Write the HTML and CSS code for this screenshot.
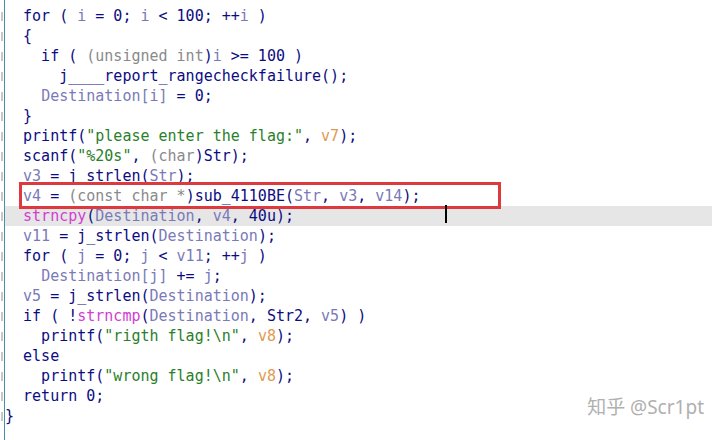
FILE: index.html
```html
<!DOCTYPE html>
<html>
<head>
<meta charset="utf-8">
<link rel="stylesheet" href="styles.css">
</head>
<body>
<div class="view">
  <div class="gutter">
    <div class="gl"></div><div class="gl"></div><div class="gl"></div><div class="gl"></div><div class="gl"></div><div class="gl"></div><div class="gl"></div><div class="gl"></div><div class="gl"></div><div class="gl"></div><div class="gl"></div><div class="gl"></div><div class="gl"></div><div class="gl"></div><div class="gl"></div><div class="gl"></div><div class="gl"></div><div class="gl"></div><div class="gl"></div><div class="gl"></div><div class="gl"></div>
  </div>
  <div class="code">
    <div class="ln">  for ( <span class="v">i</span> = 0; <span class="v">i</span> &lt; 100; ++<span class="v">i</span> )</div>
    <div class="ln">  {</div>
    <div class="ln">    if ( <span class="c">(unsigned int</span>)<span class="v">i</span> &gt;= 100 )</div>
    <div class="ln">      j____report_rangecheckfailure();</div>
    <div class="ln">    <span class="v">Destination[i]</span> = 0;</div>
    <div class="ln">  }</div>
    <div class="ln">  printf(<span class="s">"please enter the flag:"</span>, <span class="o">v7</span>);</div>
    <div class="ln">  scanf(<span class="s">"%20s"</span>, <span class="c">(char</span>)Str);</div>
    <div class="ln">  <span class="v">v3</span> = j_strlen(<span class="v">Str</span>);</div>
    <div class="ln">  <span class="v">v4</span> = <span class="c">(const char *</span>)sub_4110BE(<span class="v">Str</span>, <span class="v">v3</span>, <span class="v">v14</span>);</div>
    <div class="ln cur">  <span class="m">strncpy</span>(<span class="v">Destination</span>, <span class="v">v4</span>, 40u);</div>
    <div class="ln">  <span class="v">v11</span> = j_strlen(<span class="v">Destination</span>);</div>
    <div class="ln">  for ( <span class="v">j</span> = 0; <span class="v">j</span> &lt; <span class="v">v11</span>; ++<span class="v">j</span> )</div>
    <div class="ln">    <span class="v">Destination[j]</span> += <span class="v">j</span>;</div>
    <div class="ln">  <span class="v">v5</span> = j_strlen(<span class="v">Destination</span>);</div>
    <div class="ln">  if ( !<span class="m">strncmp</span>(<span class="v">Destination</span>, Str2, <span class="v">v5</span>) )</div>
    <div class="ln">    printf(<span class="s">"rigth flag!\n"</span>, <span class="o">v8</span>);</div>
    <div class="ln">  else</div>
    <div class="ln">    printf(<span class="s">"wrong flag!\n"</span>, <span class="o">v8</span>);</div>
    <div class="ln">  return 0;</div>
    <div class="ln">}</div>
    <div class="box"></div>
    <div class="caret"></div>
  </div>
  <div class="mark">知乎 @Scr1pt</div>
</div>
</body>
</html>
```
FILE: styles.css
```css
html, body {
  margin: 0;
  padding: 0;
  background: #ffffff;
}
.view {
  position: relative;
  width: 712px;
  height: 440px;
  overflow: hidden;
  display: flex;
  font-family: "DejaVu Sans Mono", monospace;
  font-size: 15px;
  line-height: 20px;
  color: #0c0c82;
}
.gutter {
  width: 4px;
  border-right: 1px solid #4a8fa8;
  padding-top: 6px;
  flex: none;
}
.gl {
  height: 20px;
  display: flex;
  flex-direction: column;
  justify-content: center;
}
.gl::before {
  content: "";
  display: block;
  width: 2px;
  height: 9px;
  margin-left: 1px;
  background: #c8c8c8;
}
.code {
  position: relative;
  flex: 1;
  padding-top: 6px;
}
.ln {
  white-space: pre;
  height: 20px;
}
.cur {
  background: #e6e6e6;
}
.v { color: #7a7ab8; }
.c { color: #8a8a8a; }
.s { color: #2a7f2a; }
.o { color: #df9a52; }
.m { color: #d23ed2; }
.box {
  position: absolute;
  left: 14px;
  top: 182px;
  width: 476px;
  height: 21px;
  border: 3px solid #dc3a3e;
}
.caret {
  position: absolute;
  left: 440px;
  top: 205px;
  width: 2px;
  height: 18px;
  background: #000000;
}
.mark {
  position: absolute;
  right: 8px;
  top: 395px;
  font-family: "Noto Sans", "Noto Sans CJK SC", sans-serif;
  font-size: 19px;
  line-height: 24px;
  color: #b0b0b0;
  text-shadow: 0 0 2px #ffffff, 0 0 2px #ffffff;
}
```
